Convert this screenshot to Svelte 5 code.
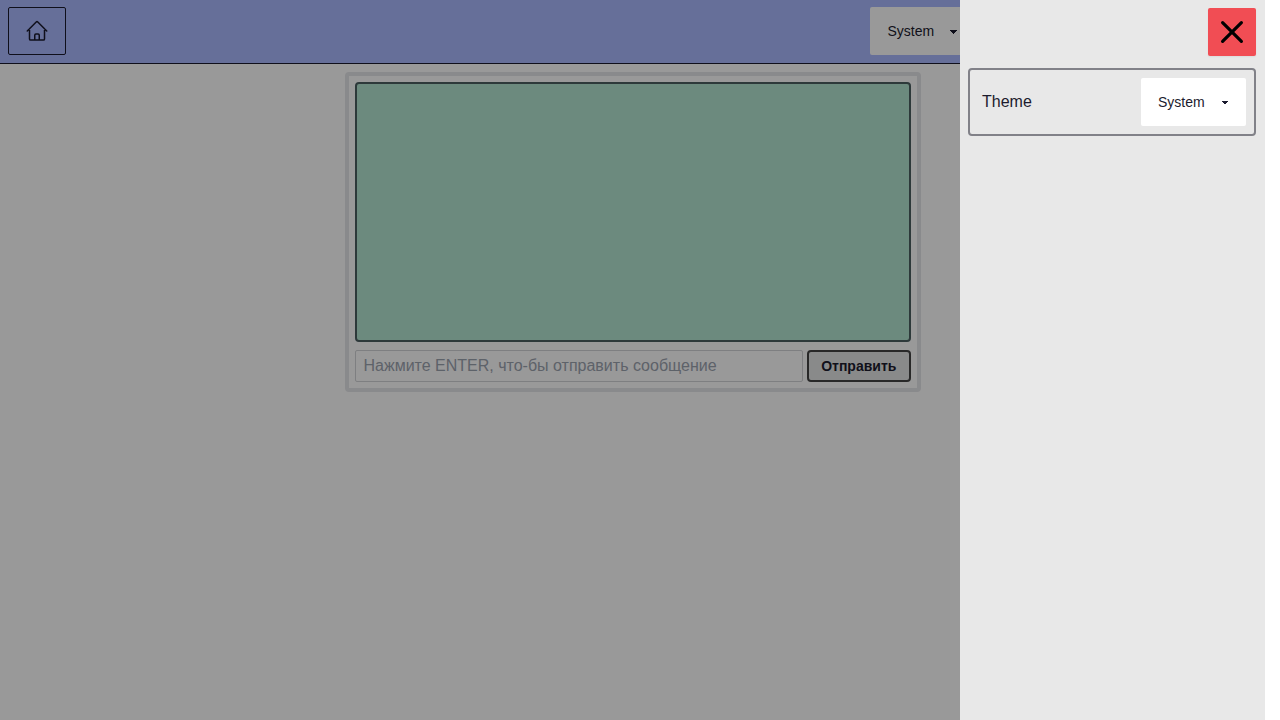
<script>
  let theme = $state('System');
</script>

{#snippet themeButton(kind)}
  <button class="select {kind}">
    <span>{theme}</span>
    <svg class="caret" viewBox="0 0 8 8"><path d={kind === 'nav' ? 'M1 3h7v1H7v1H6v1H5v1H4V6H3V5H2V4H1z' : 'M1 3h6v1H6v1H5v1H3V5H2V4H1z'} /></svg>
  </button>
{/snippet}

<div class="page">
  <header>
    <button class="home" aria-label="Home">
      <svg viewBox="0 0 24 24"><path d="m2.25 12 8.954-8.955c.44-.439 1.152-.439 1.591 0L21.75 12M4.5 9.75v10.125c0 .621.504 1.125 1.125 1.125H9.75v-4.875c0-.621.504-1.125 1.125-1.125h2.25c.621 0 1.125.504 1.125 1.125V21h4.125c.621 0 1.125-.504 1.125-1.125V9.75M8.25 21h8.25" /></svg>
    </button>
    {@render themeButton('nav')}
  </header>
  <main>
    <section class="chat">
      <div class="messages"></div>
      <form>
        <input placeholder="Нажмите ENTER, что-бы отправить сообщение" />
        <button class="send" type="button">Отправить</button>
      </form>
    </section>
  </main>
  <div class="overlay"></div>
  <aside>
    <button class="close" aria-label="Close">
      <svg viewBox="0 0 24 24"><path d="M2.6 2.6 21.4 21.4M21.4 2.6 2.6 21.4" /></svg>
    </button>
    <div class="setting">
      <span>Theme</span>
      {@render themeButton('panel')}
    </div>
  </aside>
</div>

<style>
  :global(body) { background: #fff; overflow: hidden; }
  * { box-sizing: border-box; }
  .page {
    position: relative;
    width: 1265px;
    height: 720px;
    overflow: hidden;
    color: #1c1b2e;
    font: 16px/24px "Liberation Sans", Arial, sans-serif;
  }
  button { font: inherit; color: inherit; margin: 0; }
  header {
    display: flex;
    align-items: center;
    justify-content: space-between;
    height: 64px;
    padding: 0 290px 2px 8px;
    background: #abb9ff;
    border-bottom: 1px solid #1a1a2e;
  }
  .home {
    display: flex;
    align-items: center;
    justify-content: center;
    width: 58px;
    height: 48px;
    padding: 0;
    background: none;
    border: 1px solid #1a1a2e;
    border-radius: 2px;
  }
  .home svg { width: 24px; height: 24px; fill: none; stroke: #1a1a2e; stroke-width: 1.5; stroke-linecap: round; stroke-linejoin: round; }
  .select {
    display: flex;
    align-items: center;
    gap: 16px;
    width: 105px;
    height: 48px;
    padding: 0 0 0 17px;
    background: #fff;
    border: 0;
    border-radius: 2px;
    font-size: 14px;
    line-height: 14px;
    text-align: left;
  }
  .select span { flex: none; width: 47px; }
  .nav { padding-left: 17.5px; gap: 14.5px; }
  .caret { flex: none; width: 8px; height: 8px; fill: #1a1a2e; }
  main { display: flex; justify-content: center; padding-top: 8px; }
  .chat {
    display: flex;
    flex-direction: column;
    gap: 8px;
    width: 576px;
    height: 320px;
    padding: 6px;
    border: 4px solid #e5e6e9;
    border-radius: 4px;
  }
  .messages { flex: 1; background: #b5e6d2; border: 2px solid #4b5f62; border-radius: 4px; }
  form { display: flex; gap: 4px; }
  input {
    flex: 1;
    min-width: 0;
    height: 32px;
    padding: 0 8px;
    background: #fff;
    border: 1px solid #d3d4d8;
    border-radius: 2px;
    font: inherit;
  }
  input::placeholder { color: #9ca3af; opacity: 1; }
  .send {
    width: 104px;
    height: 32px;
    padding: 0 0 0 0.5px;
    background: #e5e6e6;
    border: 2px solid #444;
    border-radius: 4px;
    font-size: 14px;
    font-weight: 700;
    line-height: 14px;
  }
  .overlay { position: absolute; inset: 0; background: rgba(0, 0, 0, 0.4); }
  aside {
    position: absolute;
    inset: 0 0 0 auto;
    display: flex;
    flex-direction: column;
    align-items: flex-end;
    gap: 12px;
    width: 305px;
    padding: 8px 9px 8px 8px;
    background: #e8e8e8;
  }
  .close {
    display: flex;
    align-items: center;
    justify-content: center;
    width: 48px;
    height: 48px;
    padding: 0;
    background: #f14d54;
    border: 0;
    border-radius: 2px;
    box-shadow: 0 1px 2px rgba(0, 0, 0, 0.06);
  }
  .close svg { width: 24px; height: 24px; stroke: #000; stroke-width: 3.2; stroke-linecap: round; }
  .setting {
    display: flex;
    align-items: center;
    justify-content: space-between;
    width: 288px;
    height: 68px;
    padding: 0 8px 0 12px;
    border: 2px solid #818188;
    border-radius: 4px;
  }
</style>
